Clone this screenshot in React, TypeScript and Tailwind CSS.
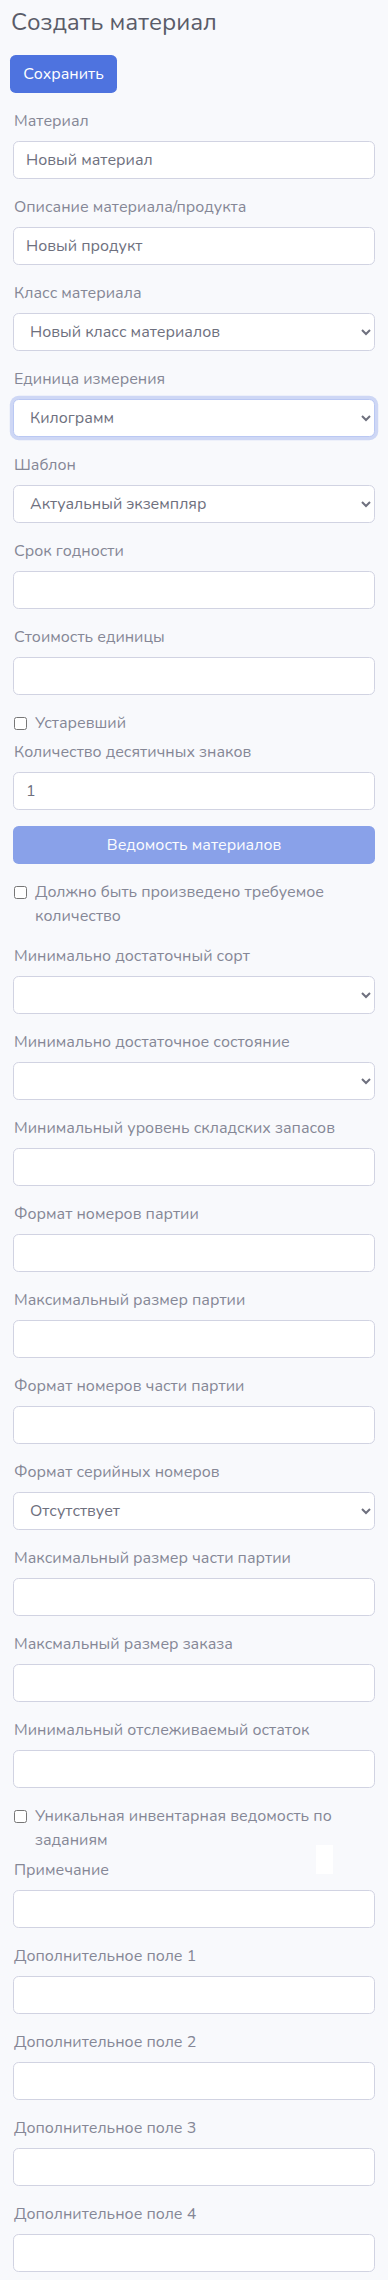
import React from "react";

const font = "font-['Nunito','Open_Sans','Noto_Sans',sans-serif]";

function Label({ children }: { children: React.ReactNode }) {
  return <label className="mb-2 block pl-[1px] text-[16px] leading-6 text-[#858796]">{children}</label>;
}

function TextField({ label, value = "" }: { label: string; value?: string }) {
  return (
    <div className="mb-4">
      <Label>{label}</Label>
      <input
        readOnly
        value={value}
        className="block h-[38px] w-full rounded-[5.6px] border border-[#d1d3e2] bg-white px-3 text-[16px] leading-6 text-[#6e707e] outline-none"
      />
    </div>
  );
}

function SelectField({ label, value = "", focused = false }: { label: string; value?: string; focused?: boolean }) {
  return (
    <div className="mb-4">
      <Label>{label}</Label>
      <select
        defaultValue={value}
        className={
          focused
            ? "block h-[38px] w-full rounded-[5.6px] border border-[#bac8f3] bg-white px-3 text-[16px] leading-6 text-[#6e707e] shadow-[0_0_0_3.2px_rgba(78,115,223,0.25)] outline-none"
            : "block h-[38px] w-full rounded-[5.6px] border border-[#d1d3e2] bg-white px-3 text-[16px] leading-6 text-[#6e707e] outline-none"
        }
      >
        <option value={value}>{value}</option>
      </select>
    </div>
  );
}

function Check({ children, mb }: { children: React.ReactNode; mb: string }) {
  return (
    <div className={"flex items-start " + mb}>
      <input type="checkbox" className="ml-[1px] mt-[6px] h-[13px] w-[13px] shrink-0" />
      <span className="ml-[8px] text-[16px] leading-6 text-[#858796]">{children}</span>
    </div>
  );
}

export default function App() {
  return (
    <div className={"relative min-h-[2280px] bg-[#f8f9fc] " + font}>
      <h1 className="pl-[11px] pt-[8px] text-[24px] font-normal leading-[1.2] text-[#5a5c69]">Создать материал</h1>
      <button className="ml-[10px] mt-[18px] h-[38px] w-[107px] rounded-[5.6px] bg-[#4e73df] text-[16px] text-white">
        Сохранить
      </button>
      <div className="mt-4 px-[13px]">
        <TextField label="Материал" value="Новый материал" />
        <TextField label="Описание материала/продукта" value="Новый продукт" />
        <SelectField label="Класс материала" value="Новый класс материалов" />
        <SelectField label="Единица измерения" value="Килограмм" focused />
        <SelectField label="Шаблон" value="Актуальный экземпляр" />
        <TextField label="Срок годности" />
        <TextField label="Стоимость единицы" />
        <Check mb="mb-[5px]">Устаревший</Check>
        <TextField label="Количество десятичных знаков" value="1" />
        <button className="mb-4 block h-[38px] w-full rounded-[5.6px] bg-[#4e73df] text-[16px] text-white opacity-[0.65]">
          Ведомость материалов
        </button>
        <Check mb="mb-4">
          Должно быть произведено требуемое
          <br />
          количество
        </Check>
        <SelectField label="Минимально достаточный сорт" />
        <SelectField label="Минимально достаточное состояние" />
        <TextField label="Минимальный уровень складских запасов" />
        <TextField label="Формат номеров партии" />
        <TextField label="Максимальный размер партии" />
        <TextField label="Формат номеров части партии" />
        <SelectField label="Формат серийных номеров" value="Отсутствует" />
        <TextField label="Максимальный размер части партии" />
        <TextField label="Максмальный размер заказа" />
        <TextField label="Минимальный отслеживаемый остаток" />
        <Check mb="mb-[6px]">
          Уникальная инвентарная ведомость по
          <br />
          заданиям
        </Check>
        <TextField label="Примечание" />
        <TextField label="Дополнительное поле 1" />
        <div className="mt-[5px]">
          <TextField label="Дополнительное поле 2" />
        </div>
        <TextField label="Дополнительное поле 3" />
        <TextField label="Дополнительное поле 4" />
      </div>
      <div className="absolute left-[316px] top-[1845px] h-[29px] w-[17px] bg-white" />
    </div>
  );
}
